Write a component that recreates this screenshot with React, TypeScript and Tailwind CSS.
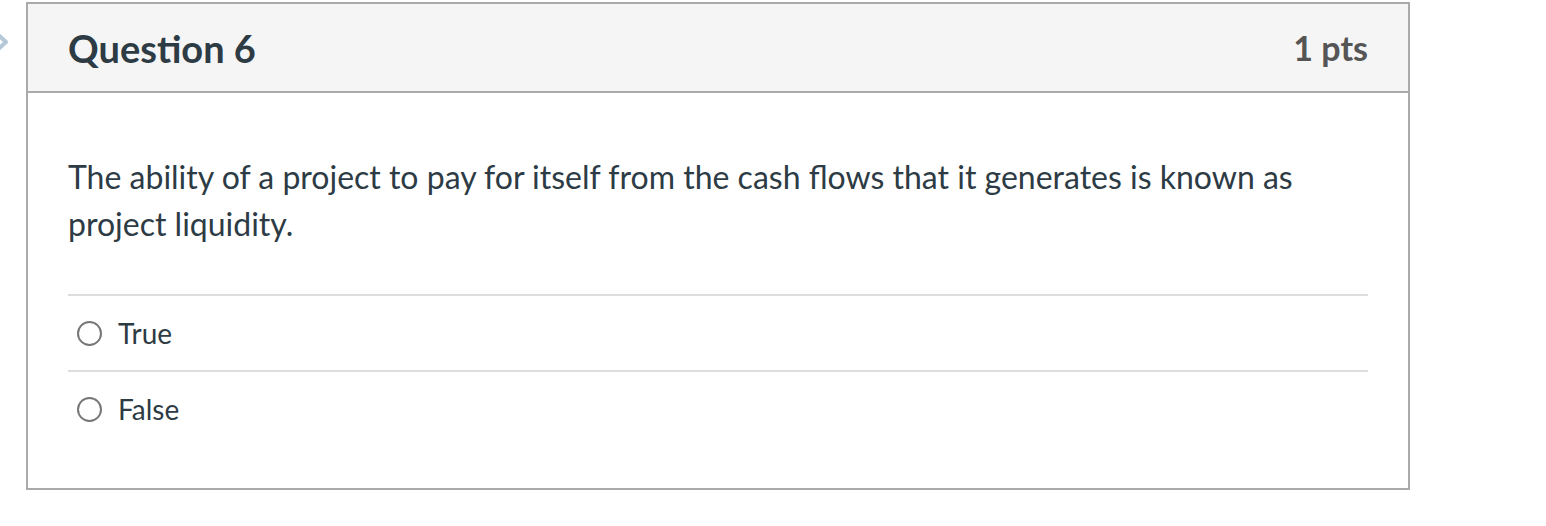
export default function App() {
  const answers = ["True", "False"];

  return (
    <div className="relative min-h-[526px] bg-white font-['Lato','Liberation_Sans',sans-serif] text-[#2d3b45]">
      {/* nav chevron peeking in at the left edge */}
      <svg
        className="absolute left-[-12px] top-[29px]"
        width="22"
        height="26"
        viewBox="0 0 22 26"
        fill="none"
      >
        <path d="M6 2 L18 13 L6 24" stroke="#b4c8d8" strokeWidth="4" strokeLinejoin="round" />
      </svg>

      <div className="ml-[26px] pt-[2px]">
        <div className="w-[1384px] border-2 border-[#aaaaaa]">
          <div className="flex h-[89px] items-center justify-between border-b-2 border-[#aaaaaa] bg-[#f5f5f5] px-[40px]">
            <h2 className="text-[38px] font-bold leading-none">Question 6</h2>
            <span className="text-[34px] font-bold leading-none text-[#555555]">1 pts</span>
          </div>

          <div className="px-[40px] pt-[60px] pb-[42px]">
            <p className="text-[32px] leading-[47px]">
              The ability of a project to pay for itself from the cash flows that it generates is known as
              project liquidity.
            </p>

            <div className="mt-[47px]">
              {answers.map((a) => (
                <div key={a} className="flex h-[76px] items-center border-t-2 border-[#dddddd] pl-[9px]">
                  <span className="box-border h-[25px] w-[25px] rounded-full border-2 border-[#777777] bg-white" />
                  <span className="ml-[16px] text-[28px] leading-none">{a}</span>
                </div>
              ))}
            </div>
          </div>
        </div>
      </div>
    </div>
  );
}
